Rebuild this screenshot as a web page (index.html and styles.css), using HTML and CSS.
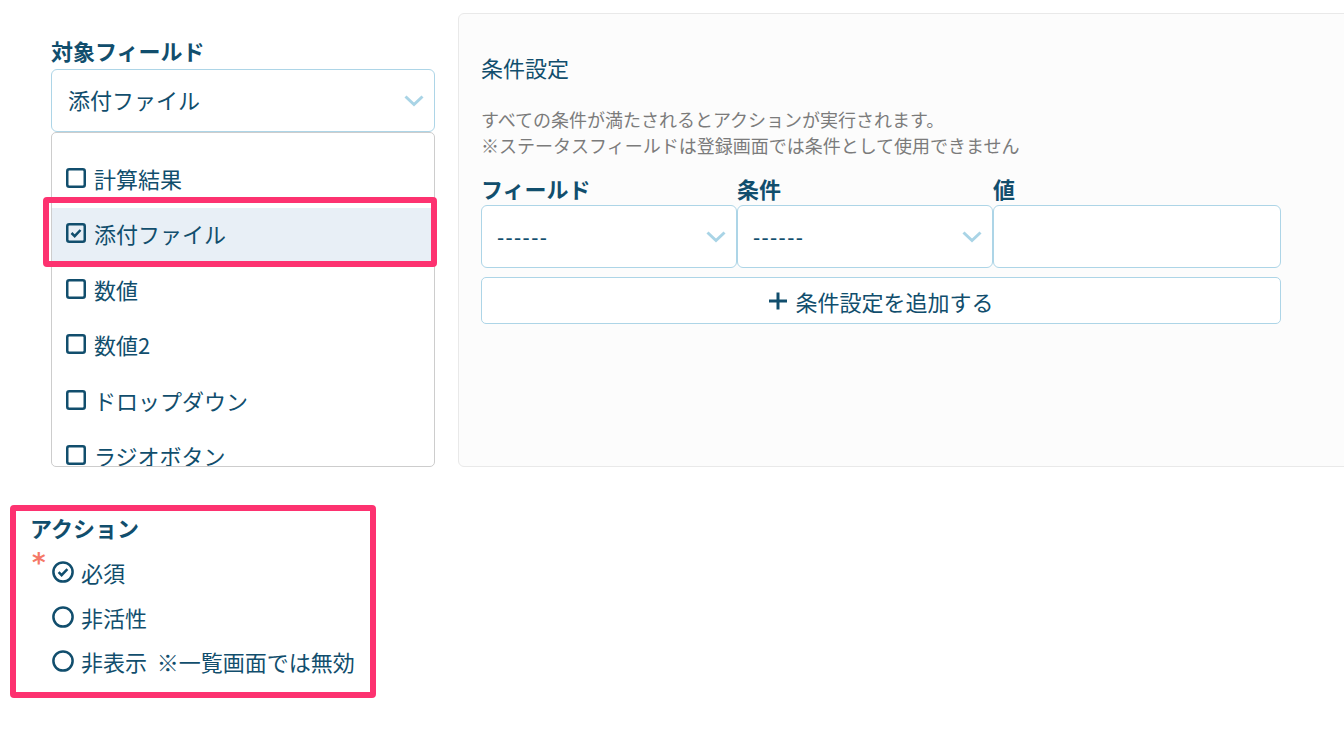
FILE: index.html
```html
<!DOCTYPE html>
<html lang="ja">
<head>
    <meta charset="UTF-8">
    <meta name="viewport" content="width=device-width, initial-scale=1.0">
    <title>条件設定</title>
    <link rel="stylesheet" href="styles.css">
</head>
<body>
    <div class="page">
        <div class="top-row">
            <!-- 対象フィールド -->
            <div class="field-col">
                <div class="field-label">対象フィールド</div>
                <div class="select select-main">
                    <span>添付ファイル</span>
                    <svg class="chevron" width="20" height="12" viewBox="0 0 20 12"><polyline points="1.5,1.5 10,9.5 18.5,1.5"/></svg>
                </div>
                <div class="option-list">
                    <div class="option">
                        <svg class="check-icon" width="20" height="20" viewBox="0 0 20 20"><rect x="1.25" y="1.25" width="17.5" height="17.5" rx="2"/></svg>
                        <span>計算結果</span>
                    </div>
                    <div class="option selected">
                        <svg class="check-icon" width="20" height="20" viewBox="0 0 20 20"><rect x="1.25" y="1.25" width="17.5" height="17.5" rx="2"/><polyline points="5.5,10 8.7,13.2 14.5,7"/></svg>
                        <span>添付ファイル</span>
                    </div>
                    <div class="option">
                        <svg class="check-icon" width="20" height="20" viewBox="0 0 20 20"><rect x="1.25" y="1.25" width="17.5" height="17.5" rx="2"/></svg>
                        <span>数値</span>
                    </div>
                    <div class="option">
                        <svg class="check-icon" width="20" height="20" viewBox="0 0 20 20"><rect x="1.25" y="1.25" width="17.5" height="17.5" rx="2"/></svg>
                        <span>数値2</span>
                    </div>
                    <div class="option">
                        <svg class="check-icon" width="20" height="20" viewBox="0 0 20 20"><rect x="1.25" y="1.25" width="17.5" height="17.5" rx="2"/></svg>
                        <span>ドロップダウン</span>
                    </div>
                    <div class="option">
                        <svg class="check-icon" width="20" height="20" viewBox="0 0 20 20"><rect x="1.25" y="1.25" width="17.5" height="17.5" rx="2"/></svg>
                        <span>ラジオボタン</span>
                    </div>
                </div>
                <div class="highlight-mark"></div>
            </div>

            <!-- 条件設定 -->
            <div class="condition-panel">
                <h3 class="panel-title">条件設定</h3>
                <p class="panel-note">すべての条件が満たされるとアクションが実行されます。<br>※ステータスフィールドは登録画面では条件として使用できません</p>
                <div class="condition-grid">
                    <div class="field-label">フィールド</div>
                    <div class="field-label">条件</div>
                    <div class="field-label">値</div>
                    <div class="select">
                        <span class="placeholder">------</span>
                        <svg class="chevron" width="20" height="12" viewBox="0 0 20 12"><polyline points="1.5,1.5 10,9.5 18.5,1.5"/></svg>
                    </div>
                    <div class="select">
                        <span class="placeholder">------</span>
                        <svg class="chevron" width="20" height="12" viewBox="0 0 20 12"><polyline points="1.5,1.5 10,9.5 18.5,1.5"/></svg>
                    </div>
                    <div class="select value-input"></div>
                </div>
                <button class="add-btn">
                    <svg class="plus-icon" width="20" height="20" viewBox="0 0 20 20"><line x1="10" y1="1.5" x2="10" y2="18.5"/><line x1="1" y1="10" x2="19" y2="10"/></svg>
                    <span>条件設定を追加する</span>
                </button>
            </div>
        </div>

        <!-- アクション -->
        <div class="action-box">
            <div class="field-label">アクション</div>
            <div class="action-group">
                <span class="required">*</span>
                <div class="radio-list">
                    <div class="radio">
                        <svg class="radio-icon" width="22" height="22" viewBox="0 0 22 22"><circle cx="11" cy="11" r="9.6"/><polyline points="6.6,11.2 9.6,14.2 15.4,8.2"/></svg>
                        <span>必須</span>
                    </div>
                    <div class="radio">
                        <svg class="radio-icon" width="22" height="22" viewBox="0 0 22 22"><circle cx="11" cy="11" r="9.6"/></svg>
                        <span>非活性</span>
                    </div>
                    <div class="radio">
                        <svg class="radio-icon" width="22" height="22" viewBox="0 0 22 22"><circle cx="11" cy="11" r="9.6"/></svg>
                        <span>非表示&nbsp;&nbsp;※一覧画面では無効</span>
                    </div>
                </div>
            </div>
        </div>
    </div>
</body>
</html>
```

FILE: styles.css
```css
* {
    margin: 0;
    padding: 0;
    box-sizing: border-box;
    font-family: 'Noto Sans CJK JP', 'Noto Sans', sans-serif;
}
body {
    background-color: #fff;
    color: #114e6d;
    overflow: hidden;
}
.page {
    padding: 13px 0 0 10px;
}
.top-row {
    display: flex;
    align-items: flex-start;
    gap: 23px;
    margin-left: 41px;
}
.field-col {
    position: relative;
    flex-shrink: 0;
    width: 384px;
    padding-top: 23px;
}
.field-label {
    font-size: 22px;
    font-weight: 700;
    line-height: 28px;
    color: #114e6d;
    white-space: nowrap;
}
.field-col > .field-label {
    margin-bottom: 5px;
}
.select {
    display: flex;
    align-items: center;
    justify-content: space-between;
    height: 63px;
    border: 1px solid #add5e7;
    border-radius: 6px;
    background-color: #fff;
    padding: 0 10px 0 15px;
}
.select-main {
    height: 63px;
    font-size: 22px;
    padding-left: 16px;
    padding-bottom: 4px;
}
.select-main .chevron {
    margin-top: 4px;
}
.chevron polyline {
    fill: none;
    stroke: #a9d4e6;
    stroke-width: 3;
}
.option-list {
    height: 335px;
    overflow: hidden;
    border: 1px solid #cdcdcd;
    border-radius: 5px;
    padding-top: 19px;
}
.option {
    display: flex;
    align-items: center;
    gap: 8px;
    height: 55.5px;
    padding-left: 14px;
    padding-bottom: 4px;
    font-size: 22px;
}
.option.selected {
    background-color: #e8eff6;
}
.check-icon rect,
.check-icon polyline,
.radio-icon circle,
.radio-icon polyline {
    fill: none;
    stroke: #114e6d;
    stroke-width: 2.5;
}
.highlight-mark {
    position: absolute;
    left: -8px;
    top: 184px;
    width: 394px;
    height: 70px;
    border: 6px solid #fd3270;
    border-radius: 4px;
}
.condition-panel {
    flex-shrink: 0;
    width: 900px;
    height: 454px;
    border: 1px solid #e9e9e9;
    border-radius: 6px;
    background-color: #fcfcfc;
    padding: 38px 0 0 22px;
}
.panel-title {
    font-size: 22px;
    font-weight: 400;
    line-height: 30px;
}
.panel-note {
    margin-top: 24px;
    font-size: 18px;
    line-height: 26px;
    color: #7b7b7b;
}
.condition-grid {
    display: grid;
    grid-template-columns: 256px 256px 288px;
    row-gap: 3px;
    margin-top: 16px;
}
.placeholder {
    font-size: 20px;
    letter-spacing: 1.4px;
    font-weight: 500;
}
.add-btn {
    display: flex;
    align-items: center;
    justify-content: center;
    gap: 7px;
    width: 800px;
    height: 47px;
    margin-top: 9px;
    border: 1px solid #add5e7;
    border-radius: 5px;
    background-color: #fff;
    color: #114e6d;
    font-size: 22px;
    cursor: pointer;
}
.plus-icon line {
    stroke: #114e6d;
    stroke-width: 3;
}
.action-box {
    width: 366px;
    height: 193px;
    margin-top: 38px;
    border: 6px solid #fd3270;
    border-radius: 4px;
    padding: 2px 0 0 14px;
}
.action-group {
    display: flex;
    margin-top: 9px;
}
.required {
    width: 22px;
    font-family: 'DejaVu Sans', sans-serif;
    font-weight: 700;
    font-size: 26px;
    line-height: 26px;
    color: #f57868;
    padding-left: 2px;
}
.radio {
    display: flex;
    align-items: center;
    gap: 7px;
    height: 44.5px;
    font-size: 22px;
    white-space: nowrap;
}
```
